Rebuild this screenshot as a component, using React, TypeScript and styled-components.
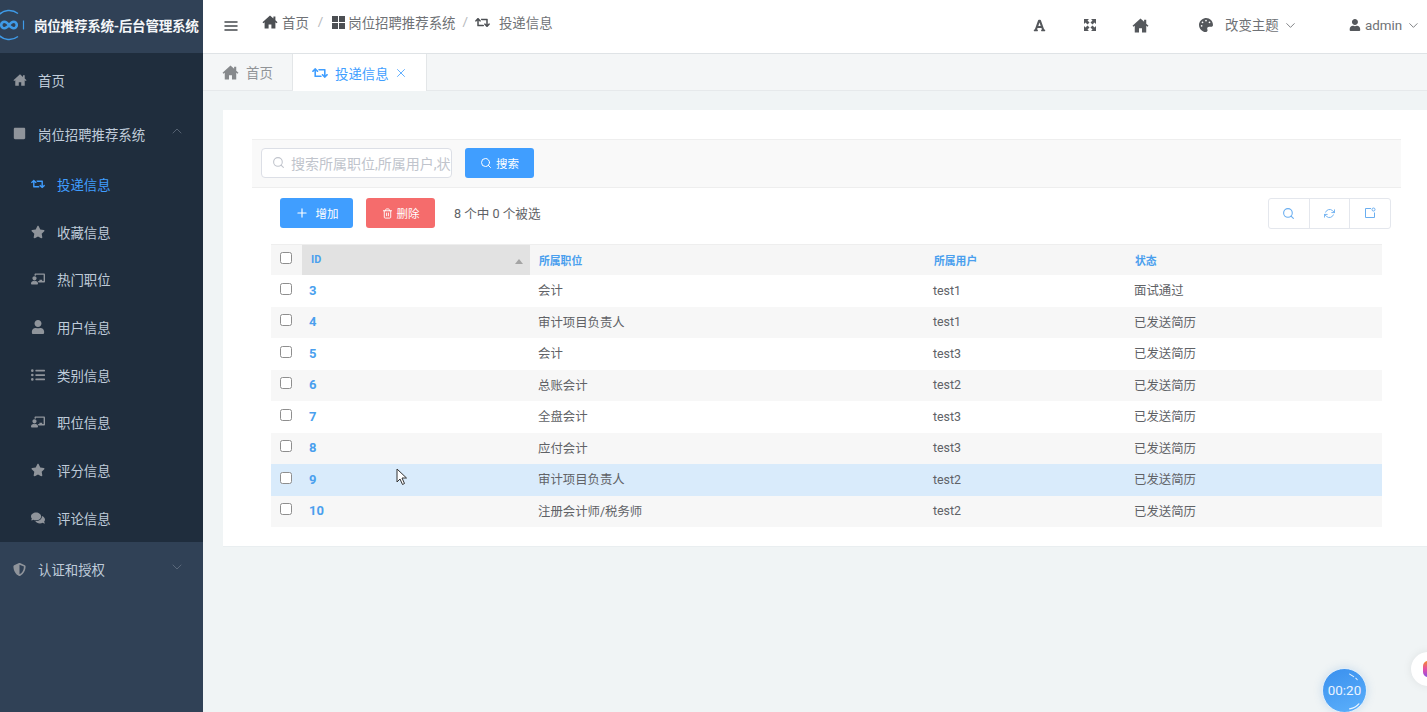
import React from "react";
import styled, { createGlobalStyle } from "styled-components";
import { FaChalkboardTeacher, FaComments, FaFont, FaListUl, FaPalette, FaRetweet, FaShieldAlt, FaSquare, FaStar, FaUser } from "react-icons/fa";
import { FiChevronDown, FiChevronUp, FiMenu, FiPlus, FiRefreshCw, FiSearch, FiTrash2, FiX } from "react-icons/fi";

const GlobalStyle = createGlobalStyle`
	html, body { margin: 0; padding: 0; height: 100%; overflow: hidden; }
	body { font-family: Roboto, "Noto Sans CJK SC", sans-serif; color: #606266; background: #f0f4f5; }
	#root { height: 100%; }
	* { box-sizing: border-box; }
`;

const Page = styled.div`
	display: flex;
	width: 1427px;
	height: 712px;
	overflow: hidden;
	position: relative;
`;

const Sidebar = styled.aside`
	width: 203px;
	flex: none;
	background: #304156;
	display: flex;
	flex-direction: column;
`;

const Brand = styled.div`
	height: 53px;
	display: flex;
	align-items: center;
	padding: 0 0 3px 34px;
	position: relative;
	color: #f4f6f8;
	font-size: 13.6px;
	font-weight: 700;
	white-space: nowrap;
	letter-spacing: -0.3px;
`;

const BrandLogo = styled.svg`
	position: absolute;
	left: -6px;
	top: 9px;
	width: 32px;
	height: 32px;
`;

const MenuRow = styled.div<{ $dark?: boolean; $h: number }>`
	height: ${(p) => p.$h}px;
	display: flex;
	align-items: center;
	padding: ${(p) => (p.$dark ? "0 18px 0 13px" : "0 18px 3px 13px")};
	font-size: 13.4px;
	color: #bfcbd9;
	background: ${(p) => (p.$dark ? "#1f2d3d" : "transparent")};
	svg { color: #8f949b; }
`;

const TopIcon = styled.span`
	width: 25px;
	display: flex;
	font-size: 13px;
`;

const Chevron = styled.span`
	margin-left: auto;
	margin-top: -5px;
	display: flex;
	svg { color: #6f7c8c; }
`;

const SubMenu = styled.div`
	background: #1f2d3d;
	height: 382px;
	display: flex;
	flex-direction: column;
`;

const SubRow = styled.div<{ $active?: boolean }>`
	height: 47.7px;
	display: flex;
	align-items: center;
	padding-left: 31px;
	font-size: 13.4px;
	color: ${(p) => (p.$active ? "#409eff" : "#bfcbd9")};
	svg { color: ${(p) => (p.$active ? "#409eff" : "#8f949b")}; }
`;

const SubIcon = styled.span`
	width: 26px;
	display: flex;
	font-size: 14px;
`;

const Main = styled.main`
	flex: 1;
	min-width: 0;
	display: flex;
	flex-direction: column;
`;

const TopBar = styled.header`
	height: 54px;
	background: #fff;
	border-bottom: 1px solid #dfe3e6;
	display: flex;
	align-items: flex-start;
	padding: 14px 6px 0 20px;
	font-size: 13.4px;
	color: #6f7276;
`;

const Burger = styled.span`
	display: flex;
	color: #45494e;
	margin: 4px 23px 0 0;
`;

const Crumb = styled.span<{ $gap?: number }>`
	display: flex;
	align-items: center;
	gap: ${(p) => p.$gap ?? 4}px;
	height: 16px;
	svg { color: #4c4f53; }
`;

const Slash = styled.span<{ $x?: number }>`
	color: #b5b8bc;
	margin: 0 ${(p) => p.$x ?? 9}px;
	line-height: 16px;
`;

const TopActions = styled.div`
	margin-left: auto;
	display: flex;
	align-items: center;
	height: 20px;
	margin-top: 1px;
	svg { color: #55585c; }
`;

const TopAction = styled.span<{ $w: number }>`
	width: ${(p) => p.$w}px;
	display: flex;
	align-items: center;
	gap: 4px;
	white-space: nowrap;
`;

const ThemeLabel = styled.span`
	margin-left: 8px;
	padding-bottom: 2px;
`;

const Tabs = styled.nav`
	height: 37px;
	display: flex;
	background: #f4f6f7;
	border-bottom: 1px solid #e6e9eb;
`;

const Tab = styled.div<{ $active?: boolean }>`
	width: ${(p) => (p.$active ? 134 : 90)}px;
	display: flex;
	align-items: center;
	padding-left: 19px;
	gap: 7px;
	font-size: 13.4px;
	height: ${(p) => (p.$active ? 37 : 36)}px;
	background: ${(p) => (p.$active ? "#fff" : "transparent")};
	color: ${(p) => (p.$active ? "#409eff" : "#919497")};
	border-right: 1px solid #e3e6e8;
	svg { color: ${(p) => (p.$active ? "#409eff" : "#86898c")}; }
`;

const TabClose = styled.span`
	display: flex;
	margin-left: -2px;
`;

const Card = styled.section`
	margin: 19px 0 0 20px;
	height: 437px;
	background: #fff;
	padding: 29px 26px 0 29px;
	border-bottom: 1px solid #e9eef0;
`;

const SearchBar = styled.div`
	height: 49px;
	background: #f9f9f9;
	border-top: 1px solid #eeeeee;
	border-bottom: 1px solid #eeeeee;
	display: flex;
	align-items: center;
	padding: 0 0 2px 9px;
	gap: 13px;
`;

const SearchField = styled.div`
	width: 191px;
	height: 30px;
	background: #fff;
	border: 1px solid #dcdfe6;
	border-radius: 4px;
	display: flex;
	align-items: center;
	padding-left: 10px;
	gap: 6px;
	color: #c0c4cc;
	font-size: 14px;
	overflow: hidden;
	white-space: nowrap;
	svg { flex: none; }
`;

const Button = styled.button<{ $bg: string; $w: number; $gap: number }>`
	width: ${(p) => p.$w}px;
	height: 30px;
	background: ${(p) => p.$bg};
	border: 0;
	border-radius: 3px;
	color: #fff;
	font-family: inherit;
	font-size: 11.5px;
	display: flex;
	align-items: center;
	justify-content: center;
	gap: ${(p) => p.$gap}px;
	padding: 0;
`;

const Toolbar = styled.div`
	display: flex;
	align-items: center;
	height: 30px;
	margin: 10px 10px 0 28px;
	gap: 13px;
`;

const SelectedInfo = styled.span`
	font-size: 12.6px;
	margin-left: 6px;
	padding-bottom: 2px;
	color: #606266;
`;

const ToolGroup = styled.div`
	margin-left: auto;
	display: flex;
	width: 123px;
	height: 31px;
	border: 1px solid #e4e7ed;
	border-radius: 3px;
`;

const ToolCell = styled.span`
	flex: 1;
	display: flex;
	align-items: center;
	justify-content: center;
	color: #6aaef0;
	& + & { border-left: 1px solid #e4e7ed; }
`;

const DataTable = styled.div`
	margin: 16px 19px 0 19px;
	width: 1111px;
`;

const HeadRow = styled.div`
	display: grid;
	grid-template-columns: 31px 228px 395px 201px 256px;
	height: 31px;
	background: #f6f6f6;
	border-top: 1px solid #eeeeee;
	align-items: center;
	font-size: 10.8px;
	font-weight: 700;
	color: #4a9fee;
`;

const HeadCell = styled.span<{ $sorted?: boolean }>`
	height: 100%;
	display: flex;
	align-items: center;
	padding: 0 0 1px ${(p) => (p.$sorted ? 9 : 9)}px;
	background: ${(p) => (p.$sorted ? "#e2e2e2" : "transparent")};
	position: relative;
`;

const SortMark = styled.i`
	position: absolute;
	right: 7px;
	top: 14px;
	border: 4.5px solid transparent;
	border-top: 0;
	border-bottom: 5px solid #a4a4a4;
`;

const CheckCell = styled.span`
	display: flex;
	justify-content: center;
	padding-right: 1px;
	margin-top: -4px;
`;

const CheckBox = styled.i`
	display: block;
	width: 12px;
	height: 12px;
	background: #fff;
	border: 1px solid #8e8e8e;
	border-radius: 2.5px;
`;

const BodyRow = styled.div<{ $striped?: boolean; $hover?: boolean }>`
	display: grid;
	grid-template-columns: 31px 228px 395px 201px 256px;
	height: 31.5px;
	align-items: center;
	font-size: 12.4px;
	color: #606266;
	background: ${(p) => (p.$hover ? "#d9ebfb" : p.$striped ? "#f7f7f7" : "#fff")};
	position: relative;
`;

const IdCell = styled.span`
	padding: 0 0 1px 7px;
	font-size: 13px;
	font-weight: 700;
	color: #4a9fee;
`;

const TextCell = styled.span`
	padding: 0 0 1px 8px;
`;

const Cursor = styled.svg`
	position: absolute;
	left: 125px;
	top: 4px;
	width: 12px;
	height: 18px;
`;

const Timer = styled.div`
	position: absolute;
	left: 1322px;
	top: 668px;
	width: 45px;
	height: 45px;
	border-radius: 50%;
	background: linear-gradient(160deg, #3a90ee, #5cb0fb);
	border: 1.5px solid #dcecfb;
	color: #eaf4ff;
	font-size: 13.4px;
	display: flex;
	align-items: center;
	justify-content: center;
	box-shadow: 0 0 8px rgba(90, 150, 210, 0.25);
`;

const TimerGloss = styled.svg`
	position: absolute;
	inset: 0;
	width: 100%;
	height: 100%;
`;

const Bubble = styled.div`
	position: absolute;
	left: 1411px;
	top: 652px;
	width: 34px;
	height: 34px;
	border-radius: 50%;
	background: #fff;
	box-shadow: 0 0 10px rgba(0, 0, 0, 0.08);
	display: flex;
	align-items: center;
	padding-left: 12px;
`;

const BubbleDot = styled.i`
	display: block;
	width: 10px;
	height: 16px;
	border-radius: 5px;
	background: linear-gradient(180deg, #f58a2c, #e64fa8 50%, #8d4fe0);
`;

// house with a chimney, solid, as in the sidebar and top bar
function HomeIcon({ size = 14 }: { size?: number }) {
	return (
		<svg width={size} height={size} viewBox="0 0 16 16" fill="currentColor">
			<path d="M8 1.500.5 8.200l.9 1L2.600 8.200V14.500h4V10.500h2.800v4h4V8.200l1.200 1 .9-1-2.100-1.900V2.500h-2V4.500z" />
		</svg>
	);
}

function GridIcon() {
	return (
		<svg width="13" height="13" viewBox="0 0 13 13" fill="currentColor">
			<path d="M0 0h6v6H0zM7 0h6v6H7zM0 7h6v6H0zM7 7h6v6H7z" />
		</svg>
	);
}

// four arrows pointing out of the centre, the fullscreen button in the top bar
function ExpandIcon() {
	return (
		<svg width="14" height="14" viewBox="0 0 14 14" fill="currentColor">
			<path d="M1 1h5L4.500 2.500 6.500 4.500 4.500 6.500 2.500 4.500 1 6zM13 1v5l-1.500-1.500-2 2-2-2 2-2L8 1zM1 13V8l1.500 1.500 2-2 2 2-2 2L6 13zM13 13H8l1.500-1.500-2-2 2-2 2 2L13 8z" />
		</svg>
	);
}

const subMenu = [
	{ icon: <FaRetweet />, label: "投递信息", active: true },
	{ icon: <FaStar />, label: "收藏信息" },
	{ icon: <FaChalkboardTeacher />, label: "热门职位" },
	{ icon: <FaUser />, label: "用户信息" },
	{ icon: <FaListUl />, label: "类别信息" },
	{ icon: <FaChalkboardTeacher />, label: "职位信息" },
	{ icon: <FaStar />, label: "评分信息" },
	{ icon: <FaComments />, label: "评论信息" },
];

const rows = [
	{ id: 3, job: "会计", user: "test1", state: "面试通过" },
	{ id: 4, job: "审计项目负责人", user: "test1", state: "已发送简历" },
	{ id: 5, job: "会计", user: "test3", state: "已发送简历" },
	{ id: 6, job: "总账会计", user: "test2", state: "已发送简历" },
	{ id: 7, job: "全盘会计", user: "test3", state: "已发送简历" },
	{ id: 8, job: "应付会计", user: "test3", state: "已发送简历" },
	{ id: 9, job: "审计项目负责人", user: "test2", state: "已发送简历" },
	{ id: 10, job: "注册会计师/税务师", user: "test2", state: "已发送简历" },
];

const App: React.FC = () => {
	return (
		<Page>
			<GlobalStyle />
			<Sidebar>
				<Brand>
					<BrandLogo viewBox="0 0 32 32" fill="none">
						<path d="M24 4.500A14.500 14.500 0 1 0 24 27.500" stroke="#3f9be8" strokeWidth="1.4" />
						<path d="M29.500 11.500v9" stroke="#3f9be8" strokeWidth="1.2" />
						<path d="M15 16c-2-2.700-3-3.300-4.500-3.300a3.300 3.300 0 0 0 0 6.600c1.500 0 2.500-.6 4.500-3.300s3-3.300 4.500-3.300a3.300 3.300 0 0 1 0 6.600c-1.500 0-2.500-.6-4.500-3.300z" stroke="#3f9be8" strokeWidth="2.6" />
					</BrandLogo>
					岗位推荐系统-后台管理系统
				</Brand>
				<MenuRow $dark $h={54}>
					<TopIcon><HomeIcon /></TopIcon>首页
				</MenuRow>
				<MenuRow $dark $h={53}>
					<TopIcon><FaSquare /></TopIcon>岗位招聘推荐系统
					<Chevron><FiChevronUp size={16} strokeWidth={1} /></Chevron>
				</MenuRow>
				<SubMenu>
					{subMenu.map((item) => (
						<SubRow key={item.label} $active={item.active}>
							<SubIcon>{item.icon}</SubIcon>
							{item.label}
						</SubRow>
					))}
				</SubMenu>
				<MenuRow $h={57}>
					<TopIcon><FaShieldAlt /></TopIcon>认证和授权
					<Chevron><FiChevronDown size={16} strokeWidth={1} /></Chevron>
				</MenuRow>
			</Sidebar>
			<Main>
				<TopBar>
					<Burger><FiMenu size={16} strokeWidth={2.2} /></Burger>
					<Crumb><HomeIcon size={16} />首页</Crumb>
					<Slash>/</Slash>
					<Crumb $gap={3}><GridIcon />岗位招聘推荐系统</Crumb>
					<Slash $x={7}>/</Slash>
					<Crumb $gap={9}><FaRetweet size={15} />投递信息</Crumb>
					<TopActions>
						<TopAction $w={50}><FaFont size={13} /></TopAction>
						<TopAction $w={49}><ExpandIcon /></TopAction>
						<TopAction $w={67}><HomeIcon size={17} /></TopAction>
						<TopAction $w={150}>
							<FaPalette size={14} />
							<ThemeLabel>改变主题</ThemeLabel>
							<FiChevronDown size={15} strokeWidth={1.2} />
						</TopAction>
						<TopAction $w={72}>
							<FaUser size={12} />admin
							<FiChevronDown size={15} strokeWidth={1.2} />
						</TopAction>
					</TopActions>
				</TopBar>
				<Tabs>
					<Tab><HomeIcon size={17} />首页</Tab>
					<Tab $active>
						<FaRetweet size={16} />投递信息
						<TabClose><FiX size={14} strokeWidth={1.4} /></TabClose>
					</Tab>
				</Tabs>
				<Card>
					<SearchBar>
						<SearchField>
							<FiSearch size={13} />
							搜索所属职位,所属用户,状态
						</SearchField>
						<Button $bg="#409eff" $w={69} $gap={4}><FiSearch size={12} />搜索</Button>
					</SearchBar>
					<Toolbar>
						<Button $bg="#409eff" $w={73} $gap={7}><FiPlus size={14} />增加</Button>
						<Button $bg="#f56c6c" $w={69} $gap={4}><FiTrash2 size={11} />删除</Button>
						<SelectedInfo>8 个中 0 个被选</SelectedInfo>
						<ToolGroup>
							<ToolCell><FiSearch size={13} /></ToolCell>
							<ToolCell><FiRefreshCw size={11} /></ToolCell>
							<ToolCell>
								<svg width="12" height="12" viewBox="0 0 12 12" fill="none" stroke="currentColor" strokeWidth="1">
									<path d="M7 1.500H1.500v9h9V5.500" />
									<circle cx="9.500" cy="2.500" r="1.500" />
								</svg>
							</ToolCell>
						</ToolGroup>
					</Toolbar>
					<DataTable>
						<HeadRow>
							<CheckCell><CheckBox /></CheckCell>
							<HeadCell $sorted>ID<SortMark /></HeadCell>
							<HeadCell>所属职位</HeadCell>
							<HeadCell>所属用户</HeadCell>
							<HeadCell>状态</HeadCell>
						</HeadRow>
						{rows.map((row, i) => (
							<BodyRow key={row.id} $striped={i % 2 === 1} $hover={row.id === 9}>
								<CheckCell><CheckBox /></CheckCell>
								<IdCell>{row.id}</IdCell>
								<TextCell>{row.job}</TextCell>
								<TextCell>{row.user}</TextCell>
								<TextCell>{row.state}</TextCell>
								{row.id === 9 && (
									<Cursor viewBox="0 0 12 18">
										<path d="M1 1v13l3-3 2.500 5.500 2-1L6 10h4.500z" fill="#fff" stroke="#333" strokeWidth="1" />
									</Cursor>
								)}
							</BodyRow>
						))}
					</DataTable>
				</Card>
			</Main>
			<Timer>
				<TimerGloss viewBox="0 0 42 42" fill="none" stroke="#e8f3ff" strokeLinecap="round">
					<path d="M26 5l4 2.500" strokeWidth="1" />
					<path d="M32 9l1.500 1.500" strokeWidth="1" />
					<path d="M26 39c4-1 7-2.500 9-5" strokeWidth="1.2" />
				</TimerGloss>
				00:20
			</Timer>
			<Bubble><BubbleDot /></Bubble>
		</Page>
	);
};

export default App;
